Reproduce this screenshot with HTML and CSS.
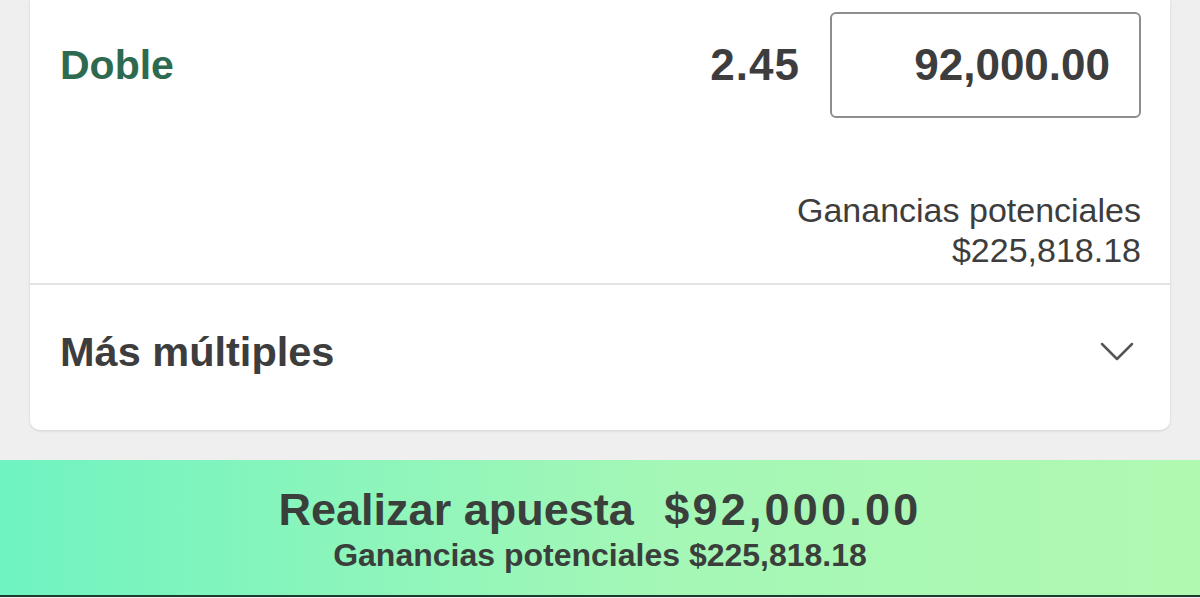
FILE: index.html
```html
<!DOCTYPE html>
<html lang="es">
<head>
    <meta charset="UTF-8">
    <meta name="viewport" content="width=device-width, initial-scale=1.0">
    <title>Boleto de apuestas</title>
    <link rel="stylesheet" href="styles.css">
</head>
<body>
    <div class="card">
        <div class="bet-row">
            <span class="bet-name">Doble</span>
            <span class="bet-odds">2.45</span>
            <div class="stake-input">92,000.00</div>
        </div>
        <div class="potential">
            <div>Ganancias potenciales</div>
            <div>$225,818.18</div>
        </div>
        <div class="more-row">
            <span class="more-title">Más múltiples</span>
            <svg class="chevron" width="34" height="20" viewBox="0 0 34 20">
                <polyline points="2,2 17,17 32,2" fill="none" stroke="#555" stroke-width="2.5" stroke-linecap="round" stroke-linejoin="round"/>
            </svg>
        </div>
    </div>
    <div class="place-bet">
        <div class="place-main">Realizar apuesta <span class="place-amount">$92,000.00</span></div>
        <div class="place-sub">Ganancias potenciales $225,818.18</div>
    </div>
</body>
</html>
```

FILE: styles.css
```css
/* Bet slip: card with stake row and a gradient "place bet" bar */
body {
    margin: 0;
    background-color: #efefef;
    font-family: 'Liberation Sans', Arial, sans-serif;
    color: #3d3d3d;
    height: 598px;
    overflow: hidden;
}

.card {
    margin: 0 30px;
    background-color: #ffffff;
    border-radius: 0 0 10px 10px;
    box-shadow: 0 1px 3px rgba(0, 0, 0, 0.12);
}

.bet-row {
    display: flex;
    align-items: center;
    padding: 12px 29px 0 30px;
}

.bet-name {
    flex: 1;
    font-size: 41px;
    font-weight: 700;
    color: #2e6a50;
}

.bet-odds {
    font-size: 44px;
    font-weight: 700;
    margin-right: 30px;
    letter-spacing: 1px;
}

.stake-input {
    box-sizing: border-box;
    width: 311px;
    height: 106px;
    border: 2px solid #8d8d8d;
    border-radius: 6px;
    display: flex;
    align-items: center;
    justify-content: flex-end;
    padding-right: 29px;
    font-size: 44px;
    font-weight: 700;
}

.potential {
    margin-top: 72px;
    padding: 0 29px 13px 0;
    text-align: right;
    font-size: 34px;
    line-height: 40px;
    border-bottom: 2px solid #e4e4e4;
}

.more-row {
    display: flex;
    align-items: center;
    justify-content: space-between;
    padding: 44px 36px 55px 30px;
}

.more-title {
    font-size: 41.5px;
    line-height: 46px;
    font-weight: 700;
}

.place-bet {
    margin-top: 30px;
    height: 137px;
    box-sizing: border-box;
    padding-top: 25px;
    background: linear-gradient(90deg, #6ff3c1 0%, #a4f7b6 55%, #b0f9b1 100%);
    border-bottom: 2px solid #1d3b2c;
    text-align: center;
    color: #3a3f3c;
    font-weight: 700;
}

.place-main {
    font-size: 45px;
    line-height: 50px;
}

.place-amount {
    margin-left: 18px;
    letter-spacing: 3.2px;
}

.place-sub {
    margin-top: 2px;
    font-size: 32px;
    line-height: 36px;
}
```
